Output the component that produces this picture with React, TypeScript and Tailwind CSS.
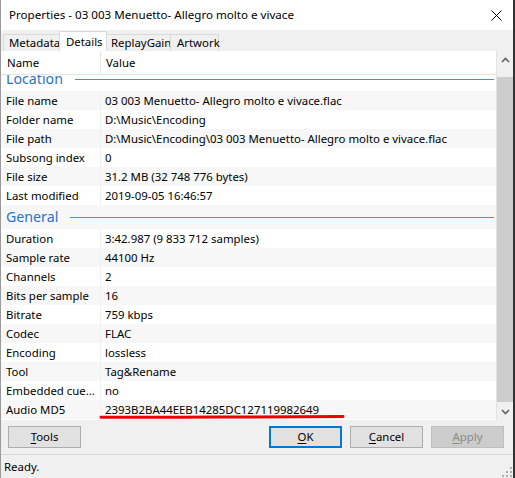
import React from "react";

type Item = { kind: "group"; label: string } | { kind: "row"; name: string; value: string };

const items: Item[] = [
  { kind: "group", label: "Location" },
  { kind: "row", name: "File name", value: "03 003 Menuetto- Allegro molto e vivace.flac" },
  { kind: "row", name: "Folder name", value: "D:\\Music\\Encoding" },
  { kind: "row", name: "File path", value: "D:\\Music\\Encoding\\03 003 Menuetto- Allegro molto e vivace.flac" },
  { kind: "row", name: "Subsong index", value: "0" },
  { kind: "row", name: "File size", value: "31.2 MB (32 748 776 bytes)" },
  { kind: "row", name: "Last modified", value: "2019-09-05 16:46:57" },
  { kind: "group", label: "General" },
  { kind: "row", name: "Duration", value: "3:42.987 (9 833 712 samples)" },
  { kind: "row", name: "Sample rate", value: "44100 Hz" },
  { kind: "row", name: "Channels", value: "2" },
  { kind: "row", name: "Bits per sample", value: "16" },
  { kind: "row", name: "Bitrate", value: "759 kbps" },
  { kind: "row", name: "Codec", value: "FLAC" },
  { kind: "row", name: "Encoding", value: "lossless" },
  { kind: "row", name: "Tool", value: "Tag&Rename" },
  { kind: "row", name: "Embedded cue…", value: "no" },
  { kind: "row", name: "Audio MD5", value: "2393B2BA44EEB14285DC127119982649" },
];

function Btn({
  first,
  rest,
  primary,
  disabled,
}: {
  first: string;
  rest: string;
  primary?: boolean;
  disabled?: boolean;
}) {
  const cls = disabled
    ? "bg-[#cccccc] border border-[#bfbfbf] text-[#8a8a8a]"
    : primary
    ? "bg-[#e1e1e1] border-2 border-[#0078d7] text-black"
    : "bg-[#e1e1e1] border border-[#adadad] text-black";
  return (
    <div className={`w-[73px] h-[22px] flex items-center justify-center ${cls}`}>
      <span>
        <span className="underline underline-offset-2">{first}</span>
        {rest}
      </span>
    </div>
  );
}

export default function App() {
  return (
    <div className="w-[515px] h-[478px] relative bg-[#f0f0f0] flex flex-col overflow-hidden border-l border-[#9a9a9a] border-r-2 border-r-[#333333] font-['Noto_Sans',sans-serif] text-[11.4px] text-black leading-none">
      {/* title bar */}
      <div className="h-[30px] bg-white flex items-center pl-[8px] pr-[9px] shrink-0">
        <span className="flex-1 text-[11.6px]">Properties - 03 003 Menuetto- Allegro molto e vivace</span>
        <svg width="11" height="11" viewBox="0 0 11 11" className="mr-[2px]">
          <path d="M0.5 0.5 L10.5 10.5 M10.5 0.5 L0.5 10.5" stroke="#000" strokeWidth="1" />
        </svg>
      </div>

      {/* tabs */}
      <div className="h-[21px] flex items-end pl-[2px] shrink-0 whitespace-nowrap">
        <div className="h-[17px] pl-[5px] flex items-center border border-b-0 border-[#d9d9d9] bg-[#f0f0f0] w-[57px]">Metadata</div>
        <div className="h-[20px] pl-[6px] -ml-px flex items-center border border-b-0 border-[#d9d9d9] bg-white w-[48px] relative z-10">Details</div>
        <div className="h-[17px] pl-[4px] -ml-px flex items-center border border-b-0 border-[#d9d9d9] bg-[#f0f0f0] w-[65px]">ReplayGain</div>
        <div className="h-[17px] pl-[6px] -ml-px flex items-center border border-b-0 border-[#d9d9d9] bg-[#f0f0f0] w-[49px]">Artwork</div>
      </div>

      {/* list + scrollbar */}
      <div className="h-[369px] flex shrink-0 relative">
        <div className="w-[496px] flex flex-col bg-white border-r border-[#e3e3e3]">
          <div className="h-[24px] flex items-center border-b border-[#e5e5e5] shrink-0">
            <div className="w-[100px] h-full flex items-center pl-[6px] border-r border-[#e5e5e5]">Name</div>
            <div className="pl-[5px]">Value</div>
          </div>
          <div className="flex-1 overflow-hidden">
            <div className="-mt-[8px]">
              {items.map((it, i) => {
                const bg = i % 2 === 1 ? "bg-[#f7f7f7]" : "bg-white";
                if (it.kind === "group") {
                  return (
                    <div key={i} className={`h-[24px] flex items-center pl-[5px] pr-[2px] ${bg}`}>
                      <span className="text-[14.2px] text-[#2a72d0]">{it.label}</span>
                      <div className="flex-1 h-px bg-[#4a8fd6] ml-[12px] mt-[1px]" />
                    </div>
                  );
                }
                return (
                  <div key={i} className={`h-[19px] flex items-center ${bg}`}>
                    <div className="w-[100px] h-full flex items-center pl-[5px] border-r border-[#f0f0f0] whitespace-nowrap overflow-hidden">
                      {it.name}
                    </div>
                    <div className="pl-[4px] whitespace-nowrap">{it.value}</div>
                  </div>
                );
              })}
            </div>
          </div>
        </div>
        {/* scrollbar */}
        <div className="w-[16px] flex flex-col bg-[#f0f0f0]">
          <div className="h-[17px] flex items-center justify-center shrink-0">
            <svg width="9" height="6" viewBox="0 0 9 6">
              <path d="M1 5 L4.5 1.5 L8 5" stroke="#606060" strokeWidth="1.6" fill="none" />
            </svg>
          </div>
          <div className="flex-1 flex flex-col pt-[9px] pb-[1px]">
            <div className="flex-1 bg-[#cdcdcd]" />
          </div>
          <div className="h-[17px] flex items-center justify-center shrink-0">
            <svg width="9" height="6" viewBox="0 0 9 6">
              <path d="M1 1 L4.5 4.5 L8 1" stroke="#606060" strokeWidth="1.6" fill="none" />
            </svg>
          </div>
        </div>
        {/* red hand-drawn underline */}
        <svg className="absolute left-[98px] top-[363px]" width="246" height="6" viewBox="0 0 246 6">
          <path d="M2 3.2 Q60 3.4 120 3 T244 2.6" stroke="#ee0000" strokeWidth="3" strokeLinecap="round" fill="none" />
        </svg>
      </div>

      {/* buttons */}
      <div className="h-[34px] flex items-start pt-[6px] pl-[7px] pr-[9px] shrink-0">
        <Btn first="T" rest="ools" />
        <div className="flex-1" />
        <div className="flex gap-[8px]">
          <Btn first="O" rest="K" primary />
          <Btn first="C" rest="ancel" />
          <Btn first="A" rest="pply" disabled />
        </div>
      </div>

      {/* status bar */}
      <div className="flex-1 border-t border-[#d9d9d9] flex items-center pl-[3px] relative">
        <span>Ready.</span>
        <svg className="absolute right-[1px] bottom-[1px]" width="10" height="10" viewBox="0 0 10 10">
          <rect x="8" y="0" width="2" height="2" fill="#b0b0b0" />
          <rect x="4" y="4" width="2" height="2" fill="#b0b0b0" />
          <rect x="8" y="4" width="2" height="2" fill="#b0b0b0" />
          <rect x="0" y="8" width="2" height="2" fill="#b0b0b0" />
          <rect x="4" y="8" width="2" height="2" fill="#b0b0b0" />
          <rect x="8" y="8" width="2" height="2" fill="#b0b0b0" />
        </svg>
      </div>
    </div>
  );
}
